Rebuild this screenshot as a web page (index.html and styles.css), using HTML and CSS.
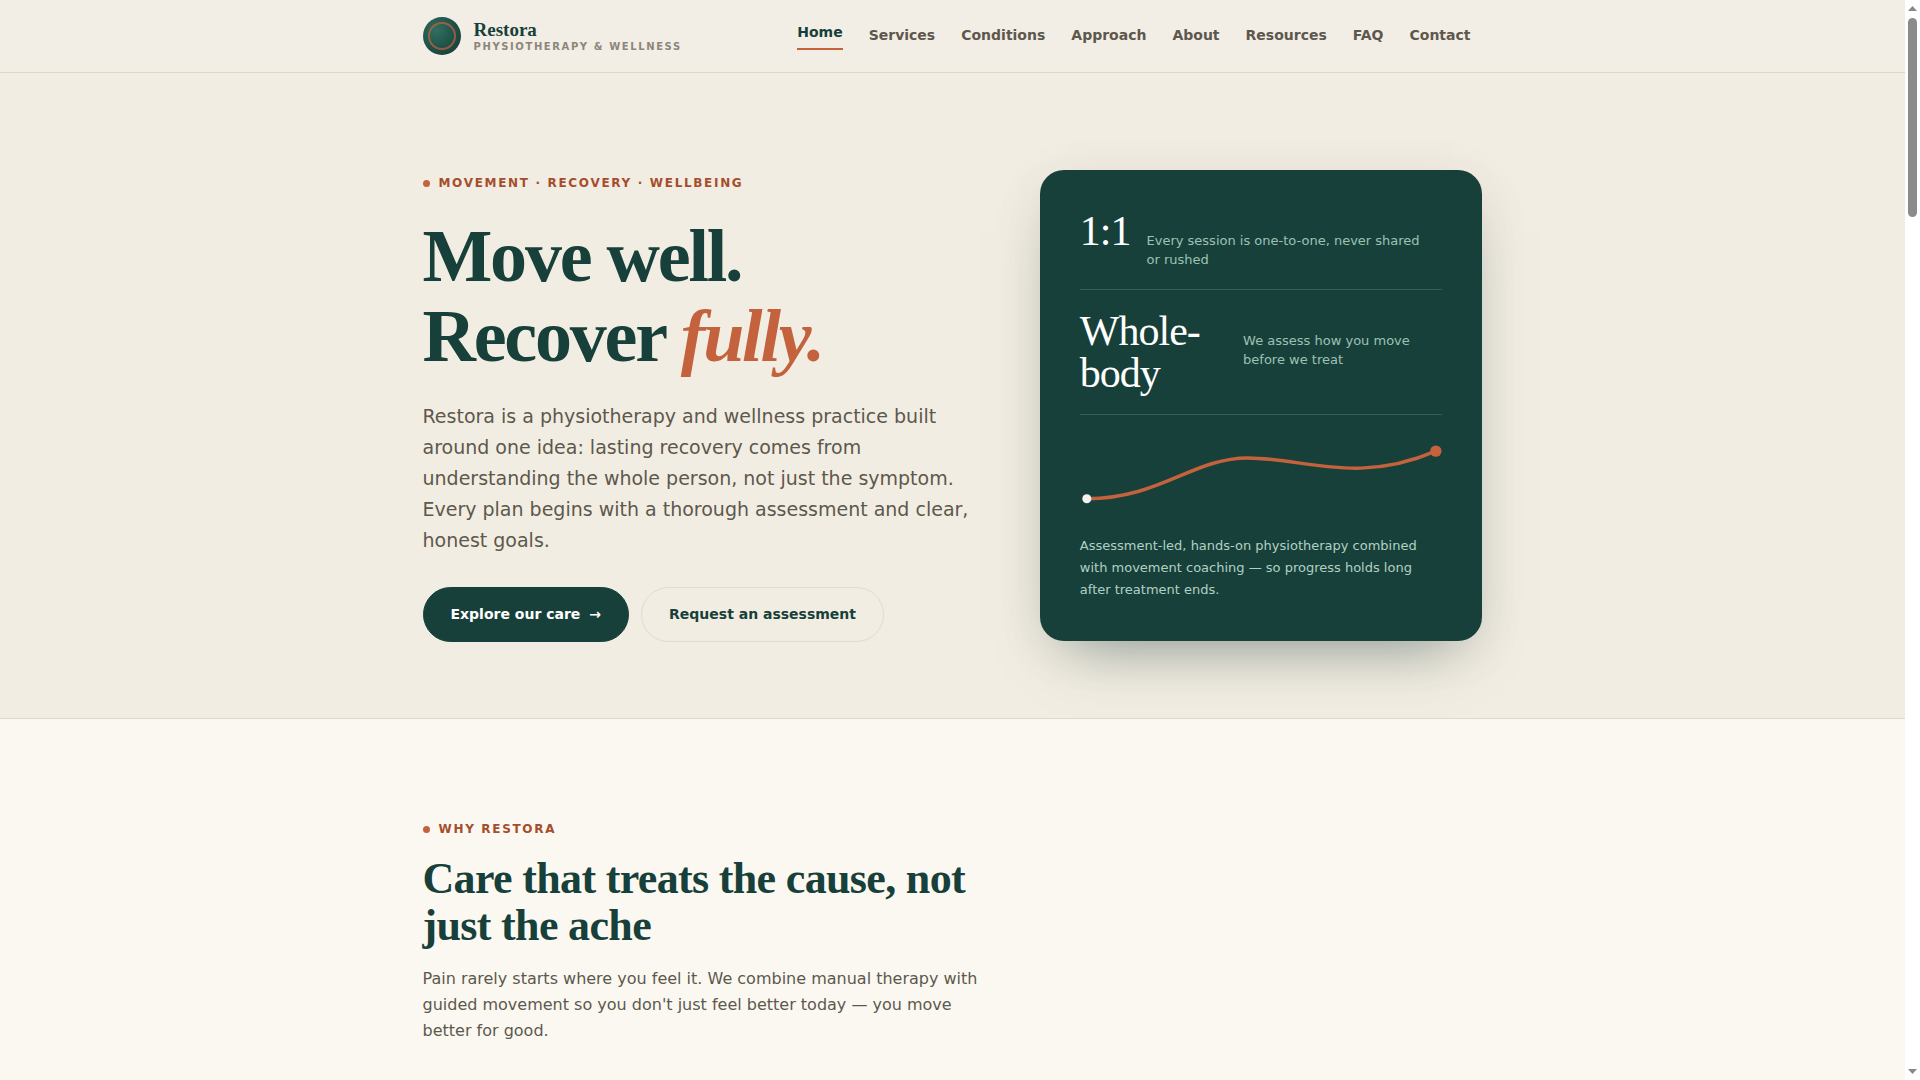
FILE: index.html
```
<!DOCTYPE html>
<html lang="en">
<head>
    <meta charset="UTF-8">
    <meta name="viewport" content="width=device-width, initial-scale=1.0">
    <title>Restora Physiotherapy &amp; Wellness</title>
    <link rel="stylesheet" href="styles.css">
</head>
<body>
    <div class="page">
        <header class="site-header">
            <div class="wrap header-inner">
                <a class="brand" href="#">
                    <span class="brand-mark"></span>
                    <span class="brand-text">
                        <span class="brand-name">Restora</span>
                        <span class="brand-sub">Physiotherapy &amp; Wellness</span>
                    </span>
                </a>
                <nav class="nav">
                    <a class="active" href="#">Home</a>
                    <a href="#">Services</a>
                    <a href="#">Conditions</a>
                    <a href="#">Approach</a>
                    <a href="#">About</a>
                    <a href="#">Resources</a>
                    <a href="#">FAQ</a>
                    <a href="#">Contact</a>
                </nav>
            </div>
        </header>

        <main>
            <section class="hero">
                <div class="wrap hero-grid">
                    <div>
                        <p class="eyebrow">Movement · Recovery · Wellbeing</p>
                        <h1>Move well.<br>Recover <em>fully.</em></h1>
                        <p class="lead">Restora is a physiotherapy and wellness practice built around one idea: lasting recovery comes from understanding the whole person, not just the symptom. Every plan begins with a thorough assessment and clear, honest goals.</p>
                        <div class="actions">
                            <a class="btn btn-primary" href="#">Explore our care <span>→</span></a>
                            <a class="btn btn-ghost" href="#">Request an assessment</a>
                        </div>
                    </div>

                    <aside class="card">
                        <div class="stat">
                            <span class="stat-num">1:1</span>
                            <span class="stat-text">Every session is one-to-one, never shared or rushed</span>
                        </div>
                        <div class="stat">
                            <span class="stat-num">Whole-body</span>
                            <span class="stat-text">We assess how you move before we treat</span>
                        </div>
                        <svg class="curve" viewBox="0 0 320 80" fill="none" aria-hidden="true">
                            <path d="M6 58 C70 58 100 22 148 22 C198 22 244 46 314 16" stroke="#c4623d" stroke-width="3" stroke-linecap="round"/>
                            <circle cx="6" cy="58" r="4" fill="#f4f3ee"/>
                            <circle cx="314" cy="16" r="5" fill="#c4623d"/>
                        </svg>
                        <p class="card-note">Assessment-led, hands-on physiotherapy combined with movement coaching — so progress holds long after treatment ends.</p>
                    </aside>
                </div>
            </section>

            <section class="why">
                <div class="wrap">
                    <div class="section-head">
                        <p class="eyebrow">Why Restora</p>
                        <h2>Care that treats the cause, not just the ache</h2>
                        <p>Pain rarely starts where you feel it. We combine manual therapy with guided movement so you don't just feel better today — you move better for good.</p>
                    </div>
                </div>
            </section>
        </main>
    </div>

    <div class="scrollbar" aria-hidden="true">
        <svg width="9" height="5" viewBox="0 0 9 5"><path d="M0 5 L4.5 0 L9 5Z" fill="#878787"/></svg>
        <span class="thumb"></span>
        <svg width="9" height="5" viewBox="0 0 9 5"><path d="M0 0 L4.5 5 L9 0Z" fill="#878787"/></svg>
    </div>
</body>
</html>
```
FILE: styles.css
```
:root{
    --green: #18403a;
    --clay: #c4623d;
    --clay-dark: #a54d2c;
    --sand: #f2ede2;
    --cream: #fbf8f1;
    --line: #ded8ca;
    --text: #5d584d;
    --serif: "Liberation Serif", "Times New Roman", serif;
}
*{
    margin: 0;
    padding: 0;
    box-sizing: border-box;
}
body{
    display: flex;
    height: 100vh;
    overflow: hidden;
    background: var(--cream);
    color: var(--text);
    font-family: "DejaVu Sans", Verdana, sans-serif;
    font-size: 16px;
    line-height: 26px;
}
a{
    color: inherit;
    text-decoration: none;
}
.page{
    flex: 1;
    min-width: 0;
}
.wrap{
    max-width: 1060px;
    margin: 0 auto;
}

/* header */
.site-header{
    background: #f2eee6;
    border-bottom: 1px solid var(--line);
}
.header-inner{
    display: flex;
    justify-content: space-between;
    align-items: center;
    min-height: 72px;
}
.brand{
    display: flex;
    align-items: center;
    gap: 13px;
}
.brand-mark{
    display: grid;
    place-items: center;
    width: 38px;
    height: 38px;
    border-radius: 50%;
    background: radial-gradient(circle at 35% 35%, #2f6f61, var(--green) 80%);
}
.brand-mark::after{
    content: "";
    width: 24px;
    height: 24px;
    border: 2px solid rgba(196, 98, 61, 0.7);
    border-radius: 50%;
}
.brand-text{
    display: grid;
    padding-top: 2px;
}
.brand-name{
    font: bold 19px/20px var(--serif);
    color: var(--green);
}
.brand-sub{
    font-size: 10px;
    font-weight: bold;
    line-height: 14px;
    letter-spacing: 0.16em;
    text-transform: uppercase;
    color: #8c867a;
}
.nav{
    display: flex;
    align-items: center;
    gap: 26px;
    padding: 0 12px 2px 0;
    font-size: 14px;
    font-weight: bold;
    line-height: 24px;
}
.nav .active{
    color: var(--green);
    padding-bottom: 4px;
    border-bottom: 2px solid var(--clay);
}

/* hero */
.hero{
    background: var(--sand);
    border-bottom: 1px solid var(--line);
    padding: 96px 0 76px;
    overflow: hidden;
}
.hero-grid{
    display: grid;
    grid-template-columns: 5fr 4fr;
    gap: 64px;
    align-items: center;
}
.eyebrow{
    display: flex;
    align-items: center;
    gap: 9px;
    font-size: 12px;
    font-weight: bold;
    line-height: 28px;
    letter-spacing: 0.14em;
    text-transform: uppercase;
    color: var(--clay-dark);
}
.eyebrow::before{
    content: "";
    width: 7px;
    height: 7px;
    border-radius: 50%;
    background: var(--clay);
}
h1{
    margin: 19px 0 25px;
    font: bold 74px/80px var(--serif);
    letter-spacing: -0.03em;
    color: var(--green);
}
h1 em{
    color: var(--clay);
}
.lead{
    font-size: 19px;
    line-height: 31px;
}
.actions{
    display: flex;
    flex-wrap: wrap;
    gap: 12px;
    margin-top: 31px;
}
.btn{
    display: inline-flex;
    gap: 9px;
    padding: 14px 27px;
    border: 1px solid var(--green);
    border-radius: 28px;
    font-size: 14px;
    font-weight: bold;
    line-height: 25px;
}
.btn-primary{
    background: var(--green);
    color: #fff;
}
.btn-ghost{
    border-color: #e1dbce;
    color: var(--green);
}

/* hero card */
.card{
    padding: 40px;
    border-radius: 24px;
    background: var(--green);
    box-shadow: 0 30px 60px -30px rgba(24, 64, 58, 0.5), 0 10px 50px rgba(60, 50, 70, 0.08);
}
.stat{
    display: flex;
    align-items: baseline;
    gap: 16px;
    padding: 20px 0;
    border-bottom: 1px solid rgba(255, 255, 255, 0.14);
}
.stat:first-child{
    padding-top: 0;
}
.stat-num{
    font: 42px/42px var(--serif);
    letter-spacing: -1px;
    color: #fff;
}
.stat-text{
    max-width: 288px;
    font-size: 13px;
    line-height: 19px;
    color: #9dc0b4;
}
.curve{
    display: block;
    width: 100%;
    margin: 18px 0 11px;
}
.card-note{
    font-size: 13px;
    line-height: 22px;
    color: #b0d0c5;
}

/* why */
.why{
    padding: 96px 0 32px;
}
.section-head{
    max-width: 570px;
}
h2{
    margin: 12px 0 17px;
    font: bold 44px/47px var(--serif);
    letter-spacing: -0.015em;
    color: var(--green);
}

/* scroll track at the window edge */
.scrollbar{
    display: flex;
    flex-direction: column;
    align-items: center;
    width: 15px;
    padding: 6px 0;
    background: #fff;
}
.scrollbar .thumb{
    width: 9px;
    height: 199px;
    margin: 7px 0 auto;
    border-radius: 5px;
    background: #8b8b8b;
}
```
